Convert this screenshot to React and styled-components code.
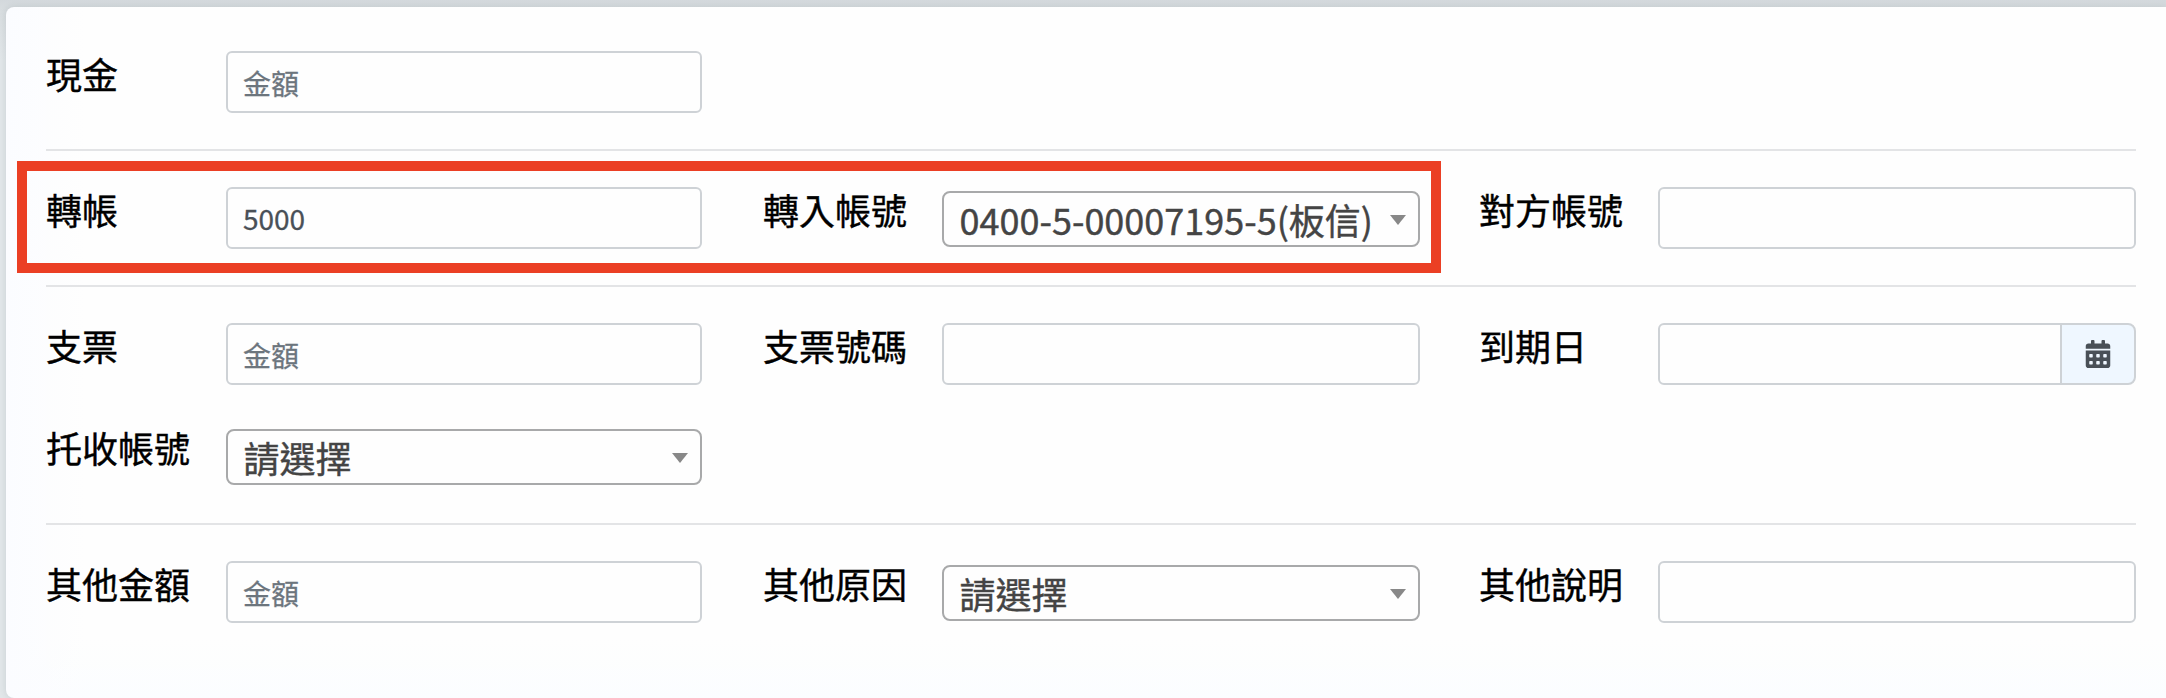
import React from 'react';
import styled, { createGlobalStyle } from 'styled-components';
import { FaCalendarAlt } from 'react-icons/fa';

const GlobalStyle = createGlobalStyle`
  * { box-sizing: border-box; }
  body {
    margin: 0;
    background: #e1e6e9;
    font-family: "Noto Sans CJK TC", sans-serif;
    overflow: hidden;
  }
`;

const Page = styled.div`
  height: 698px;
  padding: 7px 0 0 6px;
  background: linear-gradient(to bottom, #d3d8dc 0, #d7dcdf 7px, transparent 60px);
`;

const Card = styled.main`
  height: 691px;
  padding: 44px 30px 0 40px;
  border-radius: 8px 0 0 8px;
  background:
    linear-gradient(to right, #fbfcff 0, rgba(251, 252, 255, 0) 80px),
    linear-gradient(to top, #fbfdff 0, rgba(251, 253, 255, 0) 60px),
    #fefefe;
  box-shadow: 0 0 6px rgba(60, 75, 85, 0.14);
`;

const Section = styled.section`
  position: relative;
  display: grid;
  grid-template-columns: 716px 716px 658px;
  row-gap: 40px;

  & + & {
    margin-top: 36px;
    padding-top: 38px;
    background: linear-gradient(#e3e4e6, #e3e4e6) top / 100% 2px no-repeat;
  }
`;

const FieldRow = styled.div`
  display: grid;
  grid-template-columns: 180px ${({ $first }) => ($first ? '476px' : '478px')};
  grid-column-start: ${({ $first }) => ($first ? 1 : 'auto')};
  height: 62px;
`;

const Label = styled.label`
  padding-left: ${({ $first }) => ($first ? 0 : '1px')};
  font-size: 36px;
  line-height: 44px;
  color: #000;
  white-space: nowrap;
  -webkit-text-stroke: 0.4px currentColor;
`;

const TextInput = styled.input`
  display: block;
  width: 100%;
  min-width: 0;
  height: 62px;
  padding: 0 15px;
  border: 2px solid #ced2d6;
  border-radius: ${({ $grouped }) => ($grouped ? '6px 0 0 6px' : '6px')};
  background: #fefefe;
  color: #495057;
  font: 28px "Noto Sans CJK TC", sans-serif;
  -webkit-text-stroke: 0.3px currentColor;
  outline: none;

  &:placeholder-shown { padding-top: 1px; }
  &::placeholder { color: #6c757d; opacity: 1; }
`;

const InputGroup = styled.div`
  display: flex;
`;

const DateButton = styled.button`
  flex: none;
  display: flex;
  align-items: center;
  justify-content: center;
  width: 76px;
  height: 62px;
  margin-left: -2px;
  padding: 0;
  border: 2px solid #ced2d6;
  border-radius: 0 8px 8px 0;
  background: #eff7ff;
  color: #495057;
  font-size: 28px;
`;

const SelectBox = styled.button`
  display: flex;
  align-items: center;
  justify-content: space-between;
  width: 100%;
  height: 56px;
  margin: 4px 0 0;
  padding: 0 12px 0 15.5px;
  border: 2px solid #a8a9aa;
  border-radius: 8px;
  background: #fefefe;
  color: #444;
  font: 36px/52px "Noto Sans CJK TC", sans-serif;
  -webkit-text-stroke: 0.4px currentColor;
  white-space: nowrap;
`;

const Caret = styled.span`
  margin-top: 2px;
  border: 8px solid transparent;
  border-width: 10px 8px 0;
  border-top-color: #888;
`;

const Highlight = styled.div`
  position: absolute;
  left: -29px;
  top: 12px;
  width: 1424px;
  height: 112px;
  border: 10px solid #eb3f24;
  pointer-events: none;
`;

function Field({ label, first, children }) {
  return (
    <FieldRow $first={first}>
      <Label $first={first}>{label}</Label>
      <div>{children}</div>
    </FieldRow>
  );
}

function Select({ value }) {
  return (
    <SelectBox type="button">
      <span>{value}</span>
      <Caret />
    </SelectBox>
  );
}

export default function App() {
  return (
    <Page>
      <GlobalStyle />
      <Card>
        <Section>
          <Field label="現金" first><TextInput placeholder="金額" /></Field>
        </Section>
        <Section>
          <Field label="轉帳" first><TextInput defaultValue="5000" /></Field>
          <Field label="轉入帳號"><Select value="0400-5-00007195-5(板信)" /></Field>
          <Field label="對方帳號"><TextInput /></Field>
          <Highlight />
        </Section>
        <Section>
          <Field label="支票" first><TextInput placeholder="金額" /></Field>
          <Field label="支票號碼"><TextInput /></Field>
          <Field label="到期日">
            <InputGroup>
              <TextInput $grouped />
              <DateButton type="button"><FaCalendarAlt /></DateButton>
            </InputGroup>
          </Field>
          <Field label="托收帳號" first><Select value="請選擇" /></Field>
        </Section>
        <Section>
          <Field label="其他金額" first><TextInput placeholder="金額" /></Field>
          <Field label="其他原因"><Select value="請選擇" /></Field>
          <Field label="其他說明"><TextInput /></Field>
        </Section>
      </Card>
    </Page>
  );
}
